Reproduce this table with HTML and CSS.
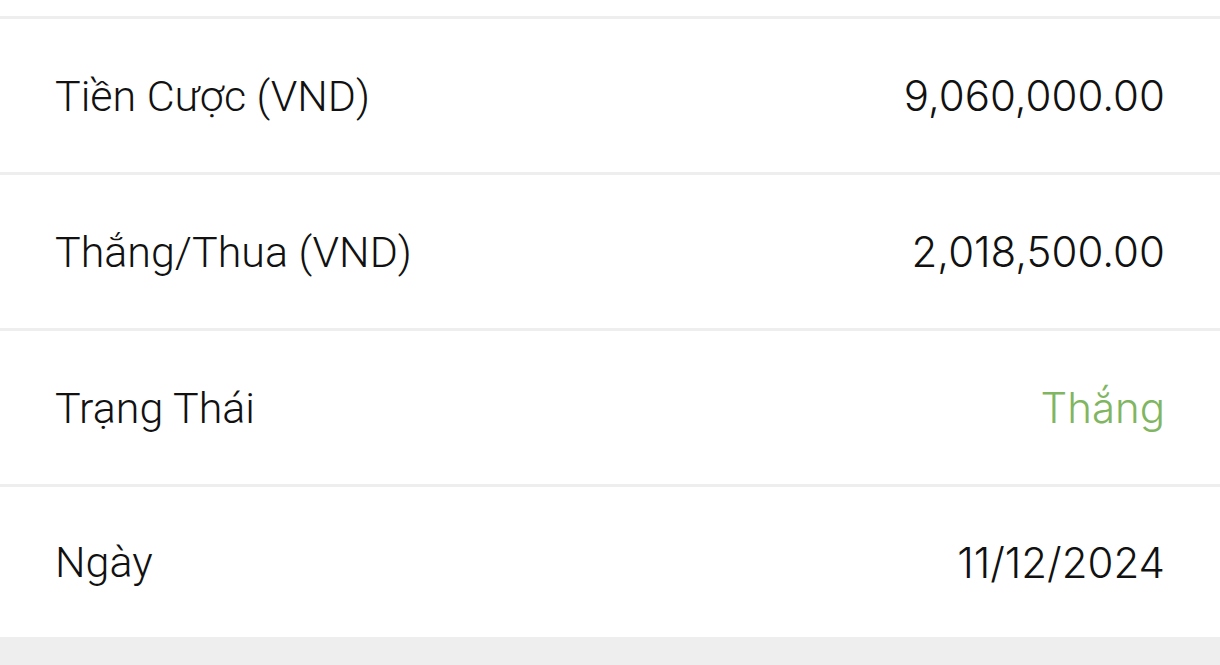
FILE: index.html
```html
<!DOCTYPE html>
<html lang="vi">
<head>
<meta charset="utf-8">
<title>Chi tiết</title>
<link rel="stylesheet" href="styles.css">
</head>
<body>
<div class="page">
  <div class="top-space"></div>
  <div class="list">
    <div class="row"><span class="label">Tiền Cược (VND)</span><span class="value">9,060,000.00</span></div>
    <div class="row"><span class="label">Thắng/Thua (VND)</span><span class="value">2,018,500.00</span></div>
    <div class="row"><span class="label">Trạng Thái</span><span class="value win">Thắng</span></div>
    <div class="row"><span class="label">Ngày</span><span class="value">11/12/2024</span></div>
  </div>
  <div class="footer"></div>
</div>
</body>
</html>
```
FILE: styles.css
```css
html, body {
  margin: 0;
  padding: 0;
  background: #ffffff;
}
.page {
  width: 1220px;
  height: 665px;
  display: flex;
  flex-direction: column;
  overflow: hidden;
  color: #111111;
}
.top-space {
  height: 16px;
  flex: none;
}
.list {
  flex: none;
}
.row {
  height: 153px;
  border-top: 3px solid #eeeeee;
  display: flex;
  align-items: center;
  justify-content: space-between;
  padding: 0 55px;
}
.row:last-child {
  height: 150px;
}
.label {
  font-family: "Roboto", "Noto Sans", sans-serif;
  font-weight: 300;
  font-size: 43px;
}
.value {
  font-family: "Inter", "Roboto", sans-serif;
  font-weight: 300;
  font-size: 42px;
}
.win {
  color: #80b661;
}
.footer {
  flex: 1;
  background: #eeeeee;
}
```
